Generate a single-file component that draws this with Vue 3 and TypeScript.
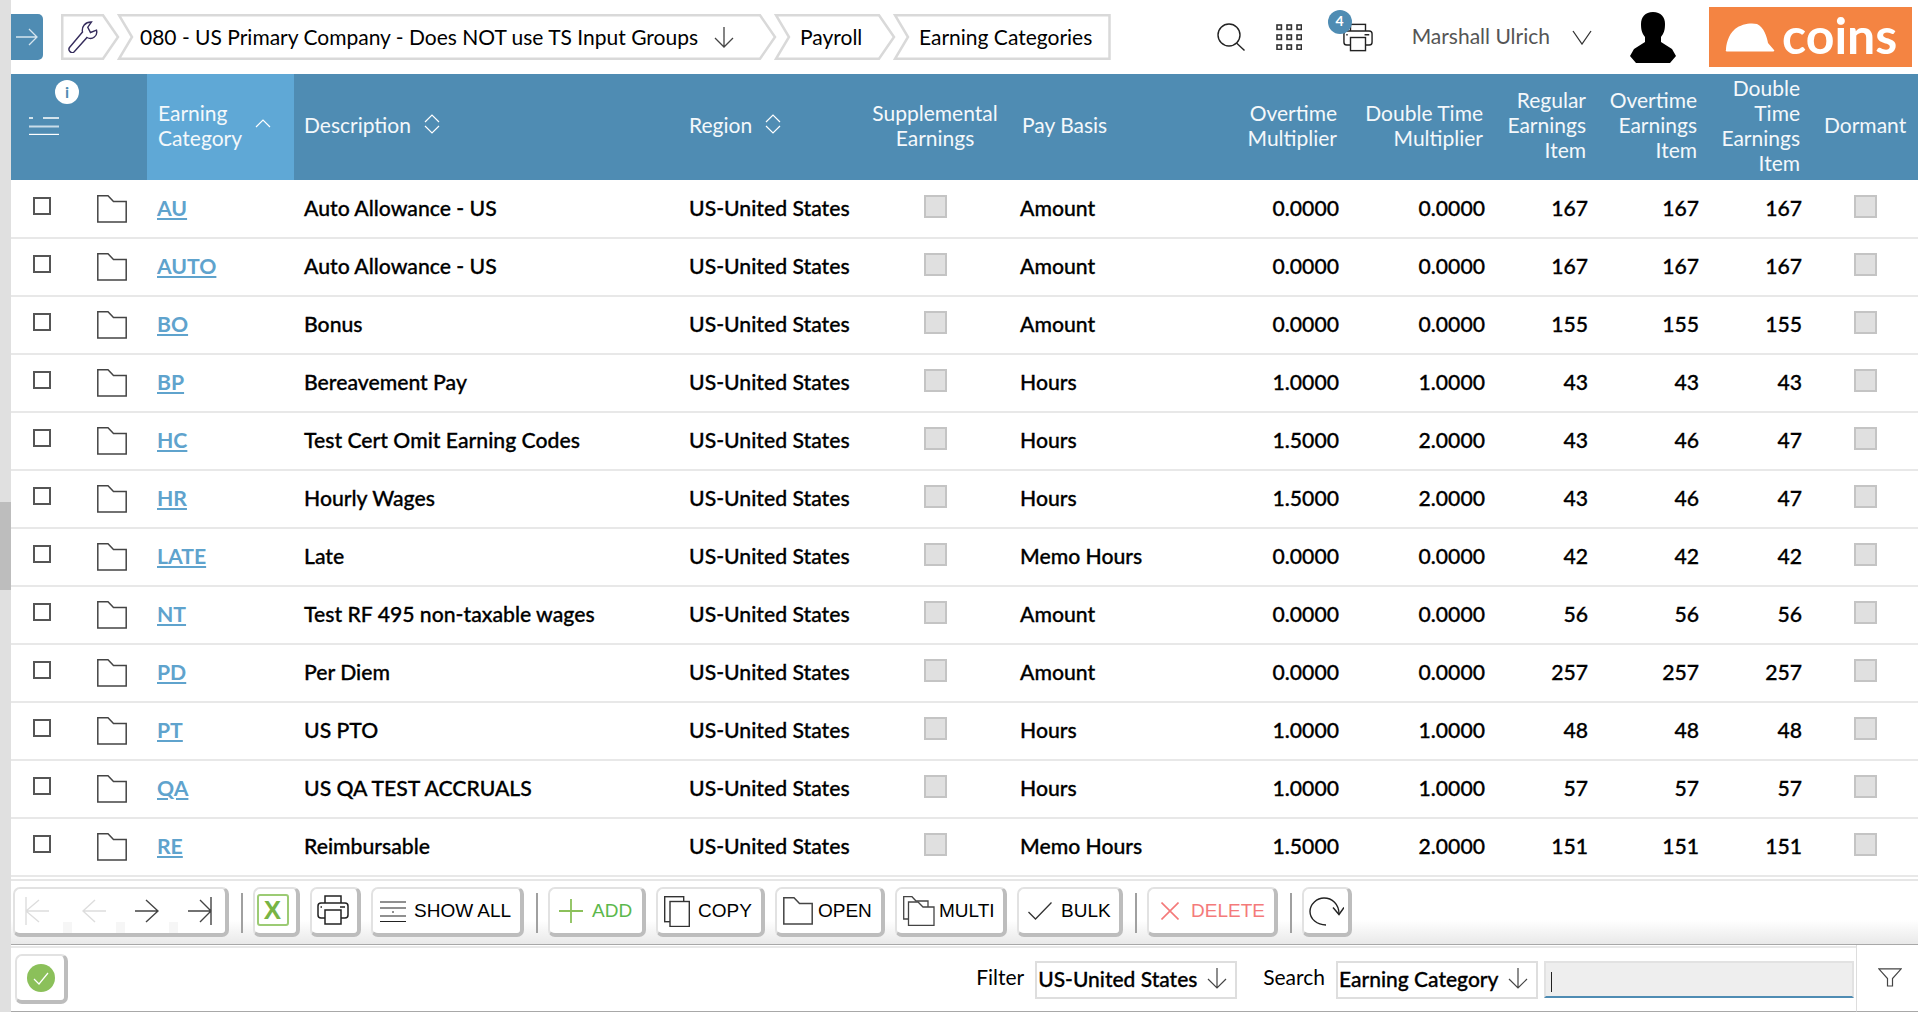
<template>
  <div class="page">
    <div class="scroll-strip">
      <div class="scroll-thumb"></div>
    </div>

    <div class="main">
      <header class="topbar">
        <button class="side-toggle">
          <svg width="22" height="18" viewBox="0 0 22 18" fill="none" stroke="#d5e5ef" stroke-width="1.3">
            <path d="M0 9H21M13 1L21 9L13 17" />
          </svg>
        </button>

        <nav class="crumbs">
          <div v-for="(c, i) in crumbs" :key="i" class="crumb" :style="{ width: c.w + 'px' }">
            <svg class="crumb-shape" :width="c.w" height="46">
              <polygon :points="crumbPoints(c.w, i)" fill="#fff" stroke="#d9d9d9" stroke-width="2.5" />
            </svg>
            <svg v-if="i === 0" class="wrench" width="32" height="32" viewBox="0 0 32 32" fill="none" stroke="#352c5c" stroke-width="1.4">
              <path d="M2.5 26.5L15.5 11C14.5 6 18 .8 24.5 1L20.8 6.2L23.5 11.5L29.5 9.2C31 14.5 25.5 19.5 20 16.5L7 31C4.5 33 .5 29.5 2.5 26.5Z" />
            </svg>
            <template v-else>
              <span class="crumb-text">{{ c.text }}</span>
              <svg v-if="c.arrow" class="crumb-arrow" width="20" height="21" viewBox="0 0 20 21" fill="none" stroke="#444" stroke-width="1.3">
                <path d="M10 0V20M1 11L10 20L19 11" />
              </svg>
            </template>
          </div>
        </nav>

        <svg class="tool-search" width="28" height="28" viewBox="0 0 28 28" fill="none" stroke="#222" stroke-width="1.4">
          <circle cx="12" cy="12" r="11" />
          <path d="M19.5 20L27.5 27.5" />
        </svg>
        <svg class="tool-grid" width="26" height="26" viewBox="0 0 26 26" fill="none" stroke="#333" stroke-width="1.6">
          <g v-for="y in [1, 11, 21]" :key="y">
            <rect v-for="x in [1, 11, 21]" :key="x" :x="x" :y="y" width="4.4" height="4.4" />
          </g>
        </svg>
        <div class="tool-print">
          <svg width="30" height="29" viewBox="0 0 32 30" fill="#fff" stroke="#222" stroke-width="1.5">
            <rect x="8" y="1" width="16" height="8" />
            <rect x="1" y="8" width="30" height="15" rx="3" />
            <rect x="8" y="15" width="16" height="14" />
            <path d="M3.5 12H5M23 12H28" />
          </svg>
          <span class="badge">4</span>
        </div>

        <span class="user-name">Marshall Ulrich</span>
        <svg class="user-chevron" width="20" height="15" viewBox="0 0 20 15" fill="none" stroke="#333" stroke-width="1.3">
          <path d="M1 1L10 14L19 1" />
        </svg>
        <svg class="avatar" width="46" height="51" viewBox="0 0 46 51" fill="#000">
          <path d="M23 0C31 0 35 5 35 12C35 18 34 21 31 25V30L42 37L46 44L40 51H6L0 44L4 37L15 30V25C12 21 11 18 11 12C11 5 15 0 23 0Z" />
        </svg>
        <div class="logo">
          <svg width="50" height="29" viewBox="0 0 50 29" fill="#fff">
            <path d="M1 27C1 22 3 12 10 6C16 1 26 -.5 32 1C39 4 42 14 43 20L49 27Q50 28.5 48 28.5L2 28.5Q0 28.5 1 27Z" />
          </svg>
          <span class="logo-text">coins</span>
        </div>
      </header>

      <div class="grid-row grid-head">
        <div class="head-menu">
          <svg width="30" height="18" viewBox="0 0 30 18" fill="none" stroke="#fff" stroke-width="1.4">
            <path d="M0 1H4M14 1H30" />
            <path d="M0 9.5H30" stroke="#c9dce8" stroke-width="2" />
            <path d="M0 17.5H30" />
          </svg>
          <span class="info-dot">i</span>
        </div>
        <div
          v-for="col in columns"
          :key="col.label"
          class="head-cell"
          :class="[col.align, { active: col.sort === 'up' }]"
        >
          <span class="head-label">{{ col.label }}</span>
          <svg v-if="col.sort === 'up'" class="sort-icon" width="16" height="9" viewBox="0 0 16 9" fill="none" stroke="#fff" stroke-width="1.2">
            <path d="M1 8L8 1L15 8" />
          </svg>
          <svg v-if="col.sort === 'both'" class="sort-icon" width="16" height="20" viewBox="0 0 16 20" fill="none" stroke="#fff" stroke-width="1.2">
            <path d="M1 8L8 1L15 8M1 12L8 19L15 12" />
          </svg>
        </div>
      </div>

      <div class="rows">
        <div v-for="row in rows" :key="row.code" class="grid-row data-row">
          <div class="select-cell">
            <span class="check"></span>
            <svg class="folder" width="30" height="28" viewBox="0 0 30 28" fill="#fff" stroke="#444" stroke-width="1.5">
              <path d="M.8.8H11L16.5 6.5H29.2V27H.8Z" />
            </svg>
          </div>
          <div class="cell"><a class="code-link">{{ row.code }}</a></div>
          <div class="cell">{{ row.desc }}</div>
          <div class="cell">US-United States</div>
          <div class="cell center"><span class="flag"></span></div>
          <div class="cell pay">{{ row.pay }}</div>
          <div class="cell right">{{ row.ot }}</div>
          <div class="cell right">{{ row.dt }}</div>
          <div class="cell right">{{ row.reg }}</div>
          <div class="cell right">{{ row.ote }}</div>
          <div class="cell right">{{ row.dte }}</div>
          <div class="cell center"><span class="flag"></span></div>
        </div>
      </div>

      <div class="toolbar">
        <div class="btn nav-group">
          <span class="nav-btn">
            <svg width="24" height="30" viewBox="0 0 24 30" fill="none" stroke="#ddd" stroke-width="1.4">
              <path d="M1 1V29M24 15H1M14 4L1 15L14 26" />
            </svg>
          </span>
          <span class="nav-gap"></span>
          <span class="nav-btn">
            <svg width="24" height="24" viewBox="0 0 24 24" fill="none" stroke="#ddd" stroke-width="1.4">
              <path d="M24 12H1M13 1L1 12L13 23" />
            </svg>
          </span>
          <span class="nav-gap"></span>
          <span class="nav-btn">
            <svg width="24" height="24" viewBox="0 0 24 24" fill="none" stroke="#444" stroke-width="1.4">
              <path d="M0 12H23M11 1L23 12L11 23" />
            </svg>
          </span>
          <span class="nav-gap"></span>
          <span class="nav-btn">
            <svg width="24" height="30" viewBox="0 0 24 30" fill="none" stroke="#444" stroke-width="1.4">
              <path d="M23 1V29M0 15H23M12 4L23 15L12 26" />
            </svg>
          </span>
        </div>
        <span class="sep"></span>
        <div class="btn btn-excel"><span class="excel-mark">X</span></div>
        <div class="btn btn-print">
          <svg width="32" height="30" viewBox="0 0 32 30" fill="#fff" stroke="#222" stroke-width="1.5">
            <rect x="8" y="1" width="16" height="8" />
            <rect x="1" y="8" width="30" height="15" rx="3" />
            <rect x="8" y="15" width="16" height="14" />
            <path d="M3.5 12H5M23 12H28" />
          </svg>
        </div>
        <div class="btn btn-show">
          <svg width="26" height="21" viewBox="0 0 26 21" fill="none" stroke="#222" stroke-width="1.2">
            <path d="M0 1H26M0 7H26M12 11H14M0 15H26M0 20.5H26" />
          </svg>
          <span>SHOW ALL</span>
        </div>
        <span class="sep"></span>
        <div class="btn btn-add">
          <svg width="24" height="24" viewBox="0 0 24 24" fill="none" stroke="#8bc05a" stroke-width="1.8">
            <path d="M12 0V24M0 12H24" />
          </svg>
          <span>ADD</span>
        </div>
        <div class="btn btn-copy">
          <svg width="26" height="31" viewBox="0 0 26 31" fill="#fff" stroke="#333" stroke-width="1.4">
            <rect x=".7" y=".7" width="19" height="25" />
            <rect x="6" y="5.5" width="19.3" height="25" />
          </svg>
          <span>COPY</span>
        </div>
        <div class="btn btn-open">
          <svg width="30" height="28" viewBox="0 0 30 28" fill="#fff" stroke="#444" stroke-width="1.5">
            <path d="M.8.8H11L16.5 6.5H29.2V27H.8Z" />
          </svg>
          <span>OPEN</span>
        </div>
        <div class="btn btn-multi">
          <svg width="32" height="30" viewBox="0 0 32 30" fill="#fff" stroke="#444" stroke-width="1.3">
            <path d="M.7.7H9L13 5H25V23H.7Z" />
            <path d="M5.5 6H15L20 11H31V29.3H5.5Z" />
          </svg>
          <span>MULTI</span>
        </div>
        <div class="btn btn-bulk">
          <svg width="24" height="18" viewBox="0 0 24 18" fill="none" stroke="#333" stroke-width="1.3">
            <path d="M.5 10L7.5 17L23.5 .5" />
          </svg>
          <span>BULK</span>
        </div>
        <span class="sep"></span>
        <div class="btn btn-delete">
          <svg width="18" height="18" viewBox="0 0 18 18" fill="none" stroke="#f47a7a" stroke-width="1.6">
            <path d="M.5.5L17.5 17.5M17.5.5L.5 17.5" />
          </svg>
          <span>DELETE</span>
        </div>
        <span class="sep"></span>
        <div class="btn btn-refresh">
          <svg width="35" height="29" viewBox="0 0 35 29" fill="none" stroke="#222" stroke-width="1.4">
            <path d="M17 28C8 28 1 22 1 14.500C1 7 8 1 15 1C23 1 30 7 30 17" />
            <path d="M24 10.500L30 17.500L35 10.500" />
          </svg>
        </div>
      </div>

      <div class="footer">
        <div class="footer-main">
          <div class="btn btn-status">
            <svg width="28" height="28" viewBox="0 0 28 28">
              <circle cx="14" cy="14" r="14" fill="#8bc05a" />
              <path d="M7 15L12 20L21 9" fill="none" stroke="#fff" stroke-width="1.2" />
            </svg>
          </div>
          <span class="field-label">Filter</span>
          <div class="select select-filter">
            <span>US-United States</span>
            <svg width="20" height="21" viewBox="0 0 20 21" fill="none" stroke="#444" stroke-width="1.2">
              <path d="M10 0V20M1 11L10 20L19 11" />
            </svg>
          </div>
          <span class="field-label label-search">Search</span>
          <div class="select select-search">
            <span>Earning Category</span>
            <svg width="20" height="21" viewBox="0 0 20 21" fill="none" stroke="#444" stroke-width="1.2">
              <path d="M10 0V20M1 11L10 20L19 11" />
            </svg>
          </div>
          <div class="search-input"><span class="caret"></span></div>
        </div>
        <div class="filter-cell">
          <svg width="24" height="19" viewBox="0 0 24 19" fill="none" stroke="#444" stroke-width="1.2">
            <path d="M.8.8H23.200L14.500 10.500V18H9.500V10.500Z" />
          </svg>
        </div>
      </div>
    </div>
  </div>
</template>

<script setup lang="ts">
interface Crumb {
  w: number;
  text?: string;
  arrow?: boolean;
}

interface Column {
  label: string;
  align?: string;
  sort?: 'up' | 'both';
}

interface Row {
  code: string;
  desc: string;
  pay: string;
  ot: string;
  dt: string;
  reg: number;
  ote: number;
  dte: number;
}

const crumbs: Crumb[] = [
  { w: 59 },
  { w: 660, text: '080 - US Primary Company - Does NOT use TS Input Groups', arrow: true },
  { w: 122, text: 'Payroll' },
  { w: 218, text: 'Earning Categories' },
];

// outline of one breadcrumb: first has a flat left edge, last a flat right edge
const crumbPoints = (w: number, i: number) => {
  const h = 46;
  const right = i === crumbs.length - 1
    ? `${w - 1.5},1.25 ${w - 1.5},${h - 1.25}`
    : `${w - 17},1.25 ${w - 2},${h / 2} ${w - 17},${h - 1.25}`;
  const left = i === 0
    ? `1.25,${h - 1.25} 1.25,1.25`
    : `2,${h - 1.25} 15,${h / 2} 2,1.25`;
  return `${right} ${left}`;
};

const columns: Column[] = [
  { label: 'Earning\nCategory', sort: 'up' },
  { label: 'Description', sort: 'both' },
  { label: 'Region', sort: 'both' },
  { label: 'Supplemental\nEarnings', align: 'center' },
  { label: 'Pay Basis', align: 'pay' },
  { label: 'Overtime\nMultiplier', align: 'right' },
  { label: 'Double Time\nMultiplier', align: 'right' },
  { label: 'Regular\nEarnings\nItem', align: 'right' },
  { label: 'Overtime\nEarnings\nItem', align: 'right' },
  { label: 'Double\nTime\nEarnings\nItem', align: 'right' },
  { label: 'Dormant', align: 'dormant' },
];

const rows: Row[] = [
  { code: 'AU', desc: 'Auto Allowance - US', pay: 'Amount', ot: '0.0000', dt: '0.0000', reg: 167, ote: 167, dte: 167 },
  { code: 'AUTO', desc: 'Auto Allowance - US', pay: 'Amount', ot: '0.0000', dt: '0.0000', reg: 167, ote: 167, dte: 167 },
  { code: 'BO', desc: 'Bonus', pay: 'Amount', ot: '0.0000', dt: '0.0000', reg: 155, ote: 155, dte: 155 },
  { code: 'BP', desc: 'Bereavement Pay', pay: 'Hours', ot: '1.0000', dt: '1.0000', reg: 43, ote: 43, dte: 43 },
  { code: 'HC', desc: 'Test Cert Omit Earning Codes', pay: 'Hours', ot: '1.5000', dt: '2.0000', reg: 43, ote: 46, dte: 47 },
  { code: 'HR', desc: 'Hourly Wages', pay: 'Hours', ot: '1.5000', dt: '2.0000', reg: 43, ote: 46, dte: 47 },
  { code: 'LATE', desc: 'Late', pay: 'Memo Hours', ot: '0.0000', dt: '0.0000', reg: 42, ote: 42, dte: 42 },
  { code: 'NT', desc: 'Test RF 495 non-taxable wages', pay: 'Amount', ot: '0.0000', dt: '0.0000', reg: 56, ote: 56, dte: 56 },
  { code: 'PD', desc: 'Per Diem', pay: 'Amount', ot: '0.0000', dt: '0.0000', reg: 257, ote: 257, dte: 257 },
  { code: 'PT', desc: 'US PTO', pay: 'Hours', ot: '1.0000', dt: '1.0000', reg: 48, ote: 48, dte: 48 },
  { code: 'QA', desc: 'US QA TEST ACCRUALS', pay: 'Hours', ot: '1.0000', dt: '1.0000', reg: 57, ote: 57, dte: 57 },
  { code: 'RE', desc: 'Reimbursable', pay: 'Memo Hours', ot: '1.5000', dt: '2.0000', reg: 151, ote: 151, dte: 151 },
];
</script>

<style>
html,
body {
  margin: 0;
  overflow: hidden;
  background: #fff;
}
</style>

<style scoped>
.page {
  display: flex;
  height: 1012px;
  font-family: Lato, "Liberation Sans", sans-serif;
  font-size: 21px;
  color: #000;
}

.scroll-strip {
  flex: 0 0 11px;
  background: #e0e0e0;
  padding-top: 502px;
  box-sizing: border-box;
}

.scroll-thumb {
  height: 88px;
  background: #bdbdbd;
}

.main {
  flex: 1;
  min-width: 0;
  display: flex;
  flex-direction: column;
  padding-right: 2px;
}

/* top bar */
.topbar {
  display: flex;
  align-items: center;
  height: 74px;
  padding-right: 6px;
  box-sizing: border-box;
}

.side-toggle {
  width: 32px;
  height: 46px;
  padding: 0 0 0 5px;
  border: none;
  border-radius: 0 5px 5px 0;
  background: #4f8cb3;
  display: flex;
  align-items: center;
}

.crumbs {
  display: flex;
  margin-left: 18px;
}

.crumb {
  position: relative;
  height: 46px;
  display: flex;
  align-items: center;
  padding-left: 26px;
  box-sizing: border-box;
  margin-right: -3px;
  line-height: 44px;
}

.crumb:nth-child(2) {
  padding-left: 23px;
}

.crumb-shape {
  position: absolute;
  left: 0;
  top: 0;
}

.crumb-text,
.crumb-arrow,
.wrench {
  position: relative;
}

.wrench {
  margin-left: -20px;
}

.crumb-arrow {
  margin-left: 16px;
}

.tool-search {
  margin-left: auto;
}

.tool-grid {
  margin-left: 31px;
}

.tool-print {
  position: relative;
  margin-left: 41px;
  height: 29px;
}

.badge {
  position: absolute;
  left: -15px;
  top: -13px;
  width: 24px;
  height: 24px;
  border-radius: 50%;
  background: #4f8cb3;
  color: #fff;
  font-size: 14px;
  font-weight: 700;
  line-height: 22px;
  text-align: center;
}

.user-name {
  margin: -4px 0 0 39px;
  color: #555;
  white-space: nowrap;
}

.user-chevron {
  margin-left: 22px;
}

.avatar {
  margin-left: 38px;
}

.logo {
  display: flex;
  align-items: center;
  width: 203px;
  height: 60px;
  margin-left: 33px;
  padding-left: 16px;
  box-sizing: border-box;
  background: #f48442;
}

.logo-text {
  margin: -5px 0 0 7px;
  color: #fff;
  font-size: 50px;
  font-weight: 700;
  line-height: 56px;
}

/* grid */
.grid-row {
  display: grid;
  grid-template-columns: 136px 147px 385px 186px 140px 195px 149px 146px 103px 111px 103px 106px;
}

.grid-head {
  height: 106px;
  background: #4f8cb3;
  color: #f4f8fb;
  line-height: 25px;
  margin-bottom: 1px;
}

.head-menu {
  position: relative;
  display: flex;
  align-items: center;
  padding-left: 18px;
  padding-bottom: 3px;
}

.info-dot {
  position: absolute;
  left: 44px;
  top: 6px;
  width: 24px;
  height: 24px;
  border-radius: 50%;
  background: #fff;
  color: #4f8cb3;
  font-size: 16px;
  font-weight: 700;
  line-height: 24px;
  text-align: center;
}

.head-cell {
  display: flex;
  align-items: center;
  padding: 0 10px 5px;
  min-width: 0;
}

.head-cell.active {
  background: #5fa8d6;
  padding-left: 11px;
}

.head-label {
  white-space: pre-line;
}

.head-cell.center {
  justify-content: center;
  text-align: center;
}

.head-cell.right {
  justify-content: flex-end;
  text-align: right;
  padding-right: 12px;
}

.head-cell.pay {
  padding-left: 17px;
}

.head-cell.dormant {
  padding-left: 12px;
  padding-right: 0;
}

.sort-icon {
  margin-left: 13px;
  margin-top: -2px;
}

.data-row {
  height: 58px;
  box-sizing: border-box;
  border-bottom: 2px solid #e8e8e8;
  font-size: 21.2px;
  font-weight: 500;
  -webkit-text-stroke: 0.3px #000;
}

.select-cell {
  display: flex;
  align-items: center;
  padding-left: 22px;
}

.check {
  width: 18px;
  height: 18px;
  box-sizing: border-box;
  border: 2px solid #555;
  margin-top: -7px;
}

.folder {
  margin-left: 46px;
}

.cell {
  display: flex;
  align-items: center;
  padding: 0 10px 2px;
  white-space: nowrap;
}

.cell.right {
  justify-content: flex-end;
}

.cell.center {
  justify-content: center;
}

.cell.pay {
  padding-left: 15px;
}

.code-link {
  color: #5fa3cd;
  -webkit-text-stroke: 0;
  font-weight: 700;
  text-decoration: underline;
  text-decoration-thickness: 2px;
  text-underline-offset: 2px;
}

.flag {
  width: 23px;
  height: 23px;
  box-sizing: border-box;
  background: #e0e0e0;
  border: 2px solid #c4c4c4;
  margin-top: -3px;
}

/* toolbar */
.toolbar {
  display: flex;
  align-items: flex-start;
  gap: 10px;
  height: 66px;
  box-sizing: border-box;
  margin-top: 2px;
  padding: 6px 0 0 2px;
  border-top: 2px solid #e6e6e6;
  border-bottom: 1px solid #a8a8a8;
  background: linear-gradient(to bottom, #fff 62%, #e9e9e9 100%);
  font-family: "Liberation Sans", Arial, sans-serif;
  font-size: 19px;
}

.btn {
  display: flex;
  align-items: center;
  flex: none;
  height: 50px;
  box-sizing: border-box;
  background: #fff;
  border: 2px solid #e2e2e2;
  border-right: 4px solid #bdbdbd;
  border-bottom: 4px solid #bdbdbd;
  border-radius: 7px;
}

.sep {
  flex: none;
  width: 2px;
  height: 40px;
  margin: 6px 0 0 2px;
  background: #a0a0a0;
}

.nav-group {
  width: 216px;
  align-items: stretch;
  padding-right: 3px;
}

.nav-btn {
  flex: 1;
  display: flex;
  align-items: center;
  justify-content: center;
}

.nav-btn:first-child {
  padding-right: 4px;
}

.nav-gap {
  flex: 0 0 9px;
  height: 11px;
  align-self: flex-end;
  background: #f6f6f6;
}

.btn-excel {
  width: 47px;
  justify-content: center;
  padding: 0 6px 2px 0;
}

.excel-mark {
  width: 32px;
  height: 32px;
  box-sizing: border-box;
  border: 2px solid #9ccb74;
  border-radius: 3px;
  color: #78b445;
  font-size: 26px;
  font-weight: 700;
  line-height: 28px;
  text-align: center;
}

.btn-print {
  width: 51px;
  justify-content: center;
  padding: 0 4px 2px 0;
}

.btn-show {
  width: 153px;
  padding-left: 7px;
  gap: 8px;
}

.btn-add {
  width: 98px;
  padding-left: 9px;
  gap: 9px;
  color: #5bb84c;
}

.btn-copy {
  width: 109px;
  padding-left: 6px;
  gap: 8px;
}

.btn-open {
  width: 110px;
  padding-left: 6px;
  gap: 5px;
}

.btn-multi {
  width: 112px;
  padding-left: 6px;
  gap: 4px;
}

.btn-bulk {
  width: 106px;
  padding-left: 9px;
  gap: 9px;
}

.btn-delete {
  width: 131px;
  padding-left: 12px;
  gap: 12px;
  color: #f47a7a;
}

.btn-refresh {
  width: 50px;
  padding-left: 5px;
}

/* footer */
.footer {
  flex: 1;
  display: flex;
  min-height: 0;
}

.footer-main {
  flex: 1;
  display: flex;
  align-items: flex-start;
  margin-top: 1px;
  padding: 6px 2px 0 4px;
  border-top: 2px solid #e8e8e8;
  border-bottom: 1px solid #a8a8a8;
}

.btn-status {
  width: 53px;
  justify-content: center;
}

.field-label {
  margin: 8px 0 0 auto;
  line-height: 30px;
}

.label-search {
  margin-left: 26px;
}

.select {
  display: flex;
  align-items: center;
  justify-content: space-between;
  height: 38px;
  box-sizing: border-box;
  margin: 7px 0 0 11px;
  padding: 0 8px 3px 1px;
  border: 2.500px solid #dedede;
  font-weight: 500;
  -webkit-text-stroke: 0.3px #000;
}

.select-filter {
  width: 202px;
}

.select-search {
  width: 202px;
}

.search-input {
  width: 310px;
  height: 37px;
  box-sizing: border-box;
  margin: 7px 0 0 6px;
  padding: 9px 0 0 5px;
  background: #eee;
  border: 2px solid #e2e2e2;
  border-bottom: 2px solid #4f8cb3;
}

.caret {
  display: block;
  width: 1px;
  height: 20px;
  background: #222;
}

.filter-cell {
  flex: 0 0 62px;
  display: flex;
  align-items: center;
  justify-content: center;
  box-sizing: border-box;
  padding: 0 0 1px 4px;
  border-left: 1px solid #ddd;
  border-bottom: 1px solid #a8a8a8;
}
</style>
